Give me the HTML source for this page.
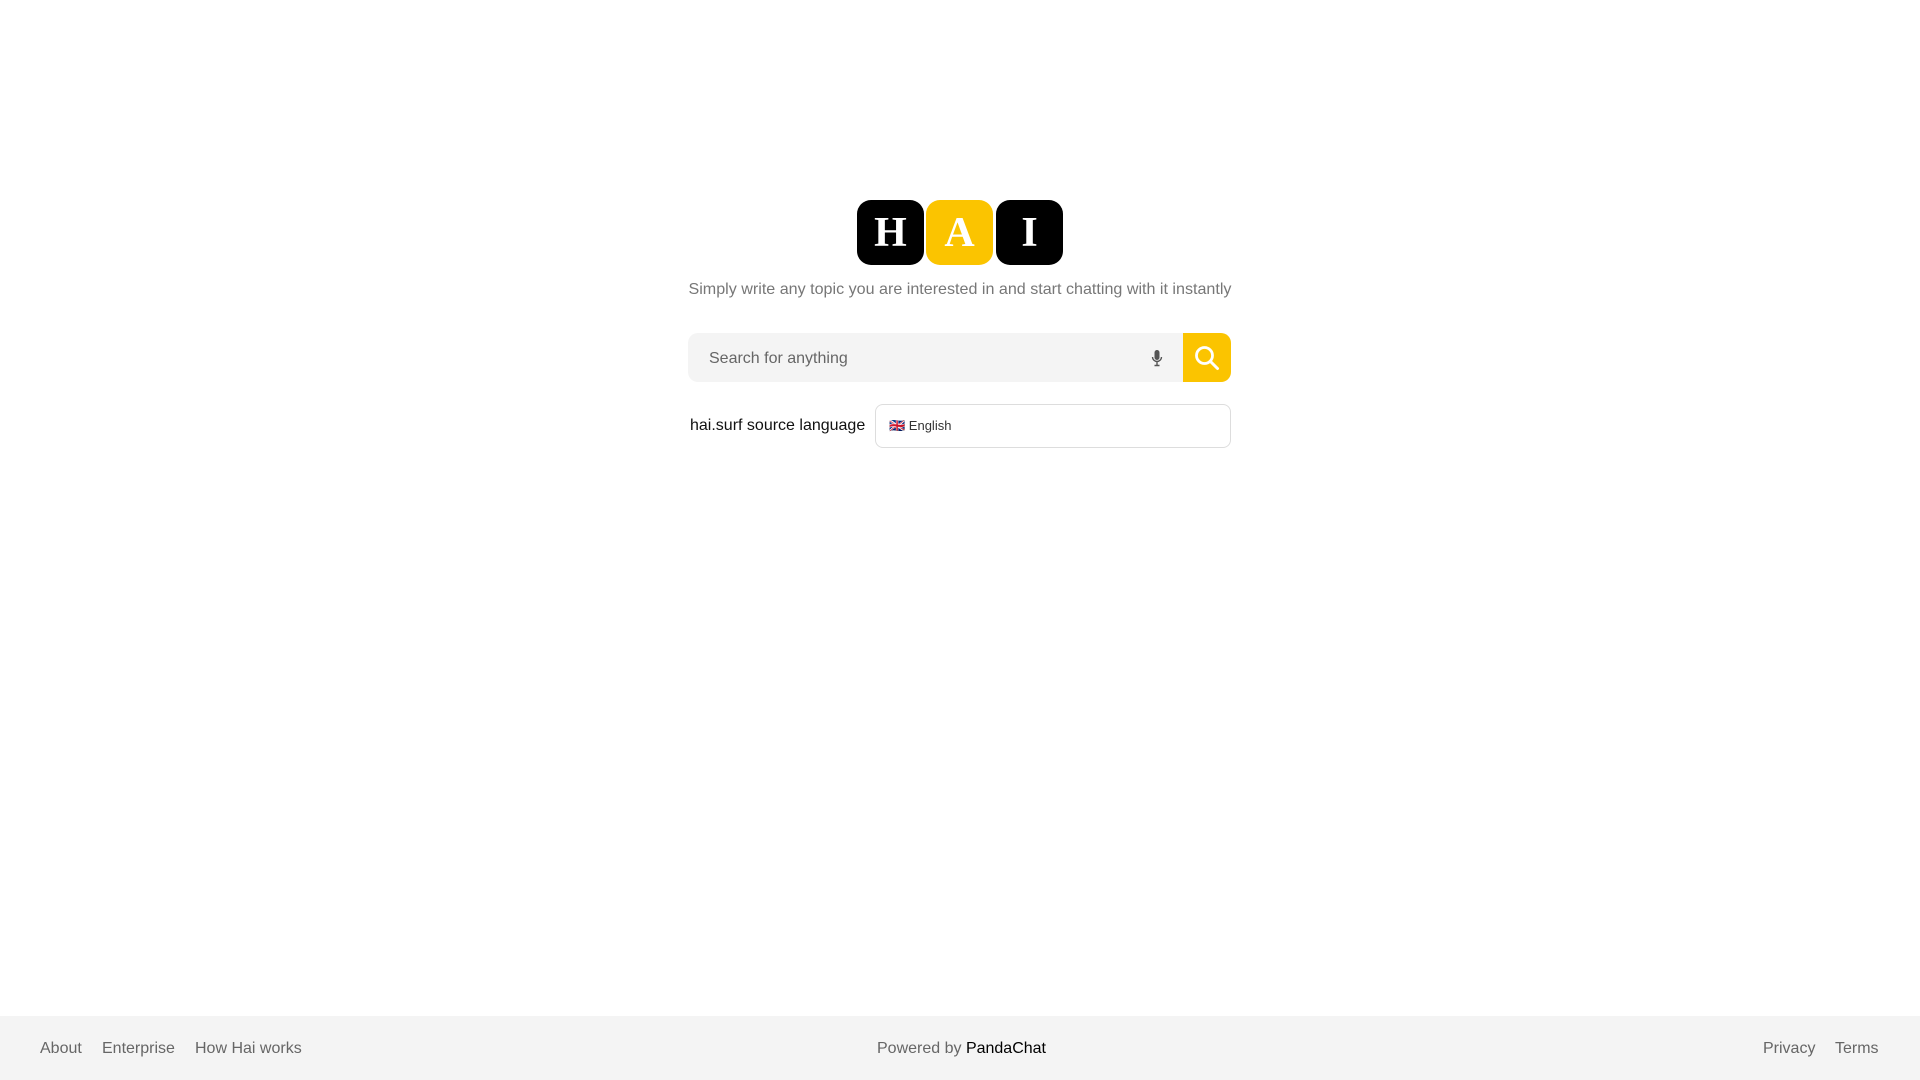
<!DOCTYPE html>
<html><head><meta charset="utf-8"><style>
body{margin:0;width:1920px;height:1080px;background:#fff;font-family:"Liberation Sans",sans-serif;position:relative;overflow:hidden}
.tile{position:absolute;top:200px;width:67px;height:65px;border-radius:14px;color:#fff;font-family:"Liberation Serif",serif;font-weight:bold;font-size:42px;display:flex;align-items:center;justify-content:center}
.sub{position:absolute;top:280px;left:0;width:1920px;text-align:center;color:#777;font-size:16.1px}
.search{position:absolute;left:688px;top:333px;width:543px;height:49px;background:#f4f4f4;border-radius:10px;overflow:hidden}
.search span{position:absolute;left:21px;top:17px;color:#666;font-size:16px}
.btn{position:absolute;right:0;top:0;width:48px;height:49px;background:#fbc400}
.lbl{position:absolute;left:690px;top:417px;font-size:16px;color:#111}
.sel{position:absolute;left:875px;top:404px;width:356px;height:44px;border:1px solid #ddd;border-radius:8px;box-sizing:border-box;font-size:13px;color:#333;padding:13px 0 0 13px}
.foot{position:absolute;left:0;top:1016px;width:1920px;height:64px;background:#f4f4f4;font-size:16px;color:#666}
.foot span{position:absolute;top:24px}
</style></head><body>
<div class="tile" style="left:857px;background:#000">H</div>
<div class="tile" style="left:926px;background:#fbc400">A</div>
<div class="tile" style="left:996px;background:#000">I</div>
<div class="sub">Simply write any topic you are interested in and start chatting with it instantly</div>
<div class="search"><span>Search for anything</span>
<svg style="position:absolute;left:463px;top:16px" width="12" height="18" viewBox="0 0 12 18"><rect x="3.5" y="1" width="5" height="10" rx="2.5" fill="#555"/><path d="M1.5 8a4.5 4.5 0 0 0 9 0M6 12.5V16M3.5 16.5h5" stroke="#555" stroke-width="1.4" fill="none"/></svg>
<div class="btn"><svg style="position:absolute;left:11px;top:12px" width="26" height="26" viewBox="0 0 26 26"><circle cx="10.5" cy="10.5" r="8" stroke="#fff" stroke-width="2.8" fill="none"/><path d="M16.5 16.5l7 7" stroke="#fff" stroke-width="3" stroke-linecap="round"/></svg></div></div>
<div class="lbl">hai.surf source language</div>
<div class="sel">🇬🇧 English</div>
<div class="foot">
<span style="left:40px">About</span><span style="left:102px">Enterprise</span><span style="left:195px">How Hai works</span>
<span style="left:877px">Powered by <b style="color:#000;font-weight:normal">PandaChat</b></span>
<span style="left:1763px">Privacy</span><span style="left:1835px">Terms</span>
</div>
</body></html>
